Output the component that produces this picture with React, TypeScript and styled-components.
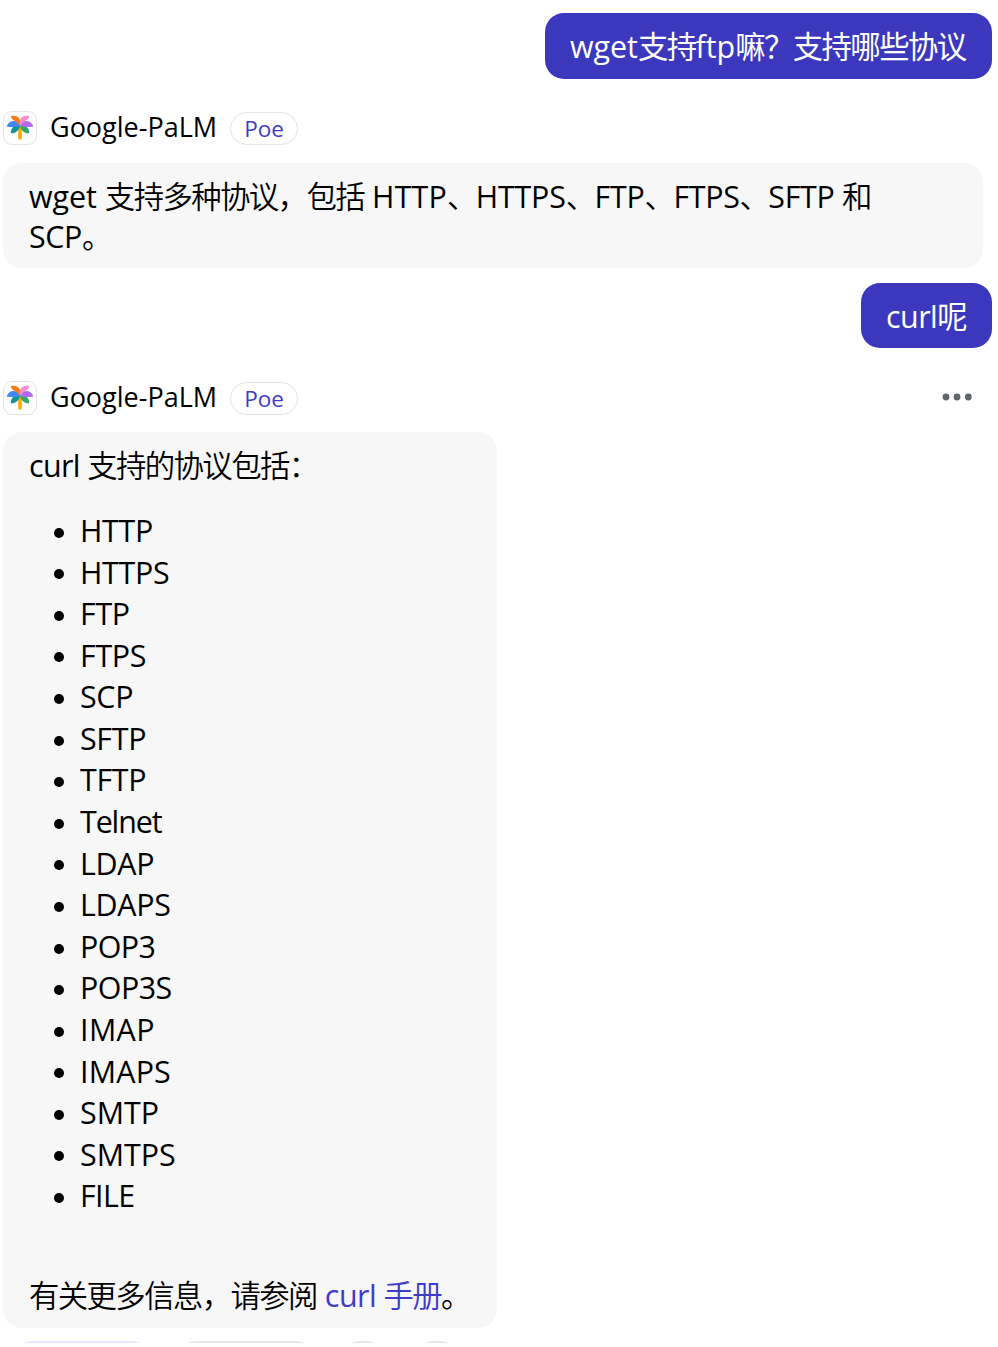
import React from "react";
import styled, { createGlobalStyle } from "styled-components";

const GlobalStyle = createGlobalStyle`
  * { box-sizing: border-box; }
  body {
    margin: 0;
    background: #fff;
    color: #000;
    font-family: "Open Sans", "Noto Sans CJK SC", sans-serif;
    font-size: 30.4px;
    line-height: 40px;
  }
`;

const Chat = styled.main`
  width: 998px;
  height: 1347px;
  padding: 13px 6px 0 3px;
  display: flex;
  flex-direction: column;
  overflow: hidden;
`;

const Turn = styled.section`
  display: flex;
  flex-direction: column;
  flex: none;
  margin-bottom: 15px;
`;

const Han = styled.span<{ $weight?: number }>`
  letter-spacing: -1.6px;
  font-weight: ${(p) => p.$weight ?? 350};
`;

const Run = styled.span<{ $track: number }>`
  letter-spacing: ${(p) => p.$track}px;
`;

const UserBubble = styled.div<{ $width: number; $height: number }>`
  align-self: flex-end;
  flex: none;
  width: ${(p) => p.$width}px;
  height: ${(p) => p.$height}px;
  padding: 14px 0 0 25px;
  border-radius: 19px;
  background: #3c38be;
  color: #fff;
  white-space: nowrap;
`;

const BotHeader = styled.header<{ $top: number; $gap: number }>`
  display: flex;
  align-items: center;
  flex: none;
  height: 34px;
  margin: ${(p) => p.$top}px 0 ${(p) => p.$gap}px;
`;

const Avatar = styled.div`
  width: 34px;
  height: 34px;
  border: 1px solid #e2e4e7;
  border-radius: 9px;
  display: flex;
  align-items: center;
  justify-content: center;
`;

const BotName = styled.span`
  width: 193px;
  margin-top: -2px;
  padding-left: 13px;
  font-size: 27px;
  line-height: 34px;
  white-space: nowrap;
`;

const Tag = styled.span`
  width: 68px;
  height: 33px;
  border: 1px solid #e2e4e7;
  border-radius: 17px;
  color: #403ccb;
  font-size: 22.5px;
  line-height: 32px;
  text-align: center;
`;

const MoreButton = styled.button`
  display: flex;
  margin: -2px 20px 0 auto;
  padding: 0;
  border: 0;
  background: none;
`;

const BotBubble = styled.article<{ $width: number; $height: number }>`
  flex: none;
  width: ${(p) => p.$width}px;
  height: ${(p) => p.$height}px;
  padding: 14px 26px 12px;
  border-radius: 19px;
  background: #f7f7f7;
`;

const Paragraph = styled.p`
  margin: 0;
  white-space: nowrap;
`;

const List = styled.ul`
  margin: 25px 0 60px;
  padding: 0;
  list-style: none;
`;

const Item = styled.li`
  display: flex;
  align-items: center;
  height: 40px;
  margin-bottom: 1.58px;
  padding-left: 25px;

  &:last-child { margin-bottom: 0; }

  &::before {
    content: "";
    width: 10px;
    height: 10px;
    margin: 3.5px 16px 0 0;
    border-radius: 50%;
    background: #000;
  }
`;

const Link = styled.a`
  color: #403ccb;
`;

const Suggestions = styled.div`
  display: flex;
  flex: none;
  height: 2px;
  margin-top: 13px;
  padding-left: 1px;
  overflow: hidden;
`;

const Chip = styled.span<{ $width: number; $gap: number; $color: string }>`
  flex: none;
  width: ${(p) => p.$width}px;
  height: 60px;
  margin-right: ${(p) => p.$gap}px;
  border: 2px solid ${(p) => p.$color};
  border-radius: 30px;
`;

const PalmIcon = () => (
  <svg width="28" height="28" viewBox="0 0 28 28">
    <path d="M12.200 11h3.600v13a1.800 1.800 0 0 1-3.600 0z" fill="#f9ab00" />
    <path d="M14 11.500C9.500 10.500 4.500 13.500 4.800 19.300C8.500 19.800 13.500 17 14 11.500z" fill="#12949b" />
    <path d="M14 11.500C18.500 10.500 23.500 13.500 23.200 19.300C19.500 19.800 14.500 17 14 11.500z" fill="#34a866" />
    <path d="M14 11.800C11.500 5.800 3.500 4.800 .6 12.500C5 13.200 9 13.500 14 11.800z" fill="#4285f4" />
    <path d="M14 11.800C16.500 5.800 24.500 4.800 27.400 12.500C23 13.200 19 13.500 14 11.800z" fill="#b568f7" />
    <path d="M14 11.500C16 5.500 11.500 .2 4.800 2.300C5.500 6.500 9.800 6.800 14 11.500z" fill="#fa7b17" />
    <path d="M14 11.500C12.500 5.500 16.500 .2 23.200 2.300C22.500 6.500 18.200 6.800 14 11.500z" fill="#ff8bcb" />
  </svg>
);

const DotsIcon = () => (
  <svg width="30" height="8" viewBox="0 0 30 8" fill="#5f6669">
    <circle cx="4" cy="4" r="3.4" />
    <circle cx="15" cy="4" r="3.4" />
    <circle cx="26.300" cy="4" r="3.4" />
  </svg>
);

const BotTitle = ({ top, gap, menu }: { top: number; gap: number; menu?: boolean }) => (
  <BotHeader $top={top} $gap={gap}>
    <Avatar><PalmIcon /></Avatar>
    <BotName>Google-PaLM</BotName>
    <Tag>Poe</Tag>
    {menu && <MoreButton aria-label="More"><DotsIcon /></MoreButton>}
  </BotHeader>
);

const protocols: { name: string; track?: number }[] = [
  { name: "HTTP" }, { name: "HTTPS" }, { name: "FTP" }, { name: "FTPS" },
  { name: "SCP" }, { name: "SFTP" }, { name: "TFTP" },
  { name: "Telnet", track: -1.1 },
  { name: "LDAP" }, { name: "LDAPS" },
  { name: "POP3", track: -0.6 }, { name: "POP3S", track: -0.5 },
  { name: "IMAP", track: 0.4 }, { name: "IMAPS", track: 0.2 },
  { name: "SMTP", track: 0 }, { name: "SMTPS", track: 0 },
  { name: "FILE", track: -0.6 },
];

export default function App() {
  return (
    <>
      <GlobalStyle />
      <Chat>
        <Turn>
          <UserBubble $width={447} $height={66}>
            <Run $track={0}>wget</Run><Han $weight={400}>支持</Han>
            <Run $track={0}>ftp</Run><Han $weight={400}>嘛？支持哪些协议</Han>
          </UserBubble>
          <BotTitle top={32} gap={18} />
          <BotBubble $width={980} $height={105}>
            <Paragraph>
              <Run $track={0}>wget </Run><Han>支持多种协议，包括</Han>
              <Run $track={0.2}> HTTP</Run><Han>、</Han>
              <Run $track={-0.2}>HTTPS</Run><Han>、</Han>
              <Run $track={-0.2}>FTP</Run><Han>、</Han>
              <Run $track={-0.3}>FTPS</Run><Han>、</Han>
              <Run $track={-0.3}>SFTP </Run><Han>和</Han>
            </Paragraph>
            <Paragraph><Run $track={-0.4}>SCP</Run><Han>。</Han></Paragraph>
          </BotBubble>
        </Turn>
        <Turn>
          <UserBubble $width={131} $height={65}>
            <Run $track={-0.5}>curl</Run><Han $weight={400}>呢</Han>
          </UserBubble>
          <BotTitle top={33} gap={17} menu />
          <BotBubble $width={494} $height={896}>
            <Paragraph><Run $track={-0.6}>curl </Run><Han>支持的协议包括：</Han></Paragraph>
            <List>
              {protocols.map(({ name, track = -0.3 }) => (
                <Item key={name}><Run $track={track}>{name}</Run></Item>
              ))}
            </List>
            <Paragraph>
              <Han>有关更多信息，请参阅</Han>{" "}
              <Link><Run $track={-0.5}>curl </Run><Han>手册</Han></Link><Han>。</Han>
            </Paragraph>
          </BotBubble>
          <Suggestions>
            <Chip $width={156} $gap={8} $color="#e6e7ff" />
            <Chip $width={156} $gap={8} $color="#e4e7e7" />
            <Chip $width={62} $gap={12} $color="#e4e7e7" />
            <Chip $width={62} $gap={0} $color="#e4e7e7" />
          </Suggestions>
        </Turn>
      </Chat>
    </>
  );
}
